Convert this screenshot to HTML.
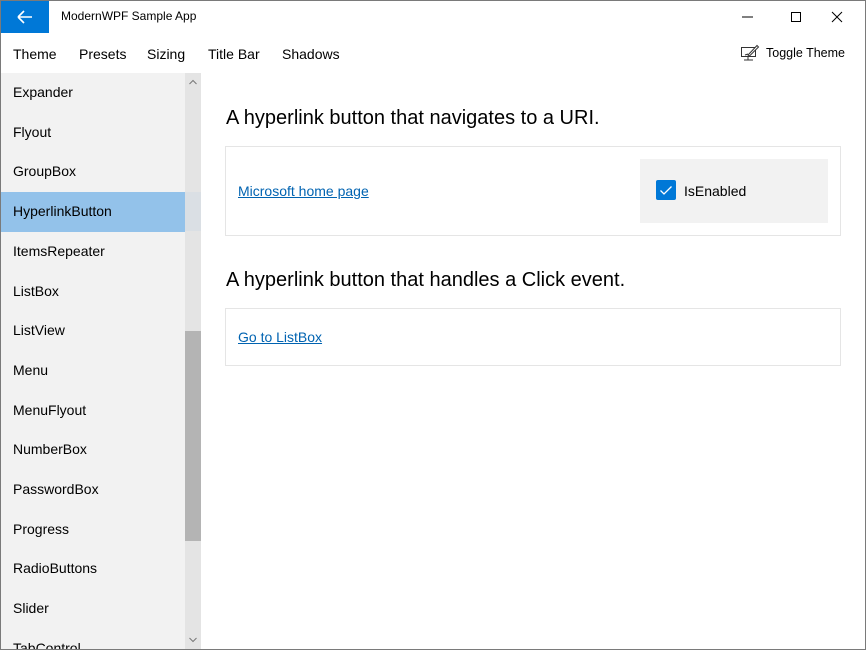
<!DOCTYPE html>
<html><head><meta charset="utf-8"><style>
*{margin:0;padding:0;box-sizing:border-box}
body{width:866px;height:650px;overflow:hidden;background:#fff;font-family:"Liberation Sans",sans-serif;color:#000;position:relative}
.frame{position:absolute;left:0;top:0;width:866px;height:650px;border:1px solid #7a7a7a;z-index:10;pointer-events:none}
.back{position:absolute;left:1px;top:1px;width:48px;height:32px;background:#0078d7}
.title{position:absolute;left:61px;top:9px;font-size:12px}
.menu{position:absolute;top:46px;font-size:14px}
.side{position:absolute;left:1px;top:73px;width:200px;height:576px;background:#f2f2f2;overflow:hidden}
.item{position:absolute;left:0;width:184px;height:39.7px;line-height:39.7px;padding-left:12px;font-size:14px}
.sb{position:absolute;left:184px;top:0;width:16px;height:576px;background:#e4e4e4}
.thumb{position:absolute;left:184px;top:258px;width:16px;height:210px;background:#b4b4b4}
h2{position:absolute;left:226px;font-weight:normal;font-size:20px}
.card{position:absolute;left:225px;width:616px;border:1px solid #e5e5e5}
a{color:#0063b1;font-size:14px;text-decoration:underline;position:absolute;left:12px}
</style></head><body>
<div class="frame"></div>
<div class="back"><svg width="48" height="32"><path d="M17 16H31M17 16L23 10M17 16L23 22" stroke="#fff" stroke-width="1.6" fill="none"/></svg></div>
<div class="title">ModernWPF Sample App</div>
<svg style="position:absolute;left:735px;top:5px" width="125" height="24"><path d="M7 12H18" stroke="#000"/><path d="M56.5 7.5h9v9h-9z" stroke="#000" fill="none"/><path d="M97 7L107 17M107 7L97 17" stroke="#000" fill="none"/></svg>
<div class="menu" style="left:13px">Theme</div>
<div class="menu" style="left:79px">Presets</div>
<div class="menu" style="left:147px">Sizing</div>
<div class="menu" style="left:208px">Title Bar</div>
<div class="menu" style="left:282px">Shadows</div>
<svg style="position:absolute;left:740px;top:44px" width="20" height="18"><rect x="1.5" y="3.5" width="14" height="9" fill="none" stroke="#333"/><path d="M8 12.5v3M4 16h9" stroke="#333"/><path d="M8 11L17 1.5l1.5 1.5L9.5 12z" fill="#fff" stroke="#333"/><path d="M5 11l3-1" stroke="#333"/></svg>
<div class="menu" style="left:766px;top:46px;font-size:12.5px">Toggle Theme</div>
<div class="side">
<div class="item" style="top:0">Expander</div>
<div class="item" style="top:39.7px">Flyout</div>
<div class="item" style="top:79.4px">GroupBox</div>
<div class="item" style="top:119.1px;background:#93c2ea">HyperlinkButton</div>
<div class="item" style="top:158.8px">ItemsRepeater</div>
<div class="item" style="top:198.5px">ListBox</div>
<div class="item" style="top:238.2px">ListView</div>
<div class="item" style="top:277.9px">Menu</div>
<div class="item" style="top:317.6px">MenuFlyout</div>
<div class="item" style="top:357.3px">NumberBox</div>
<div class="item" style="top:397px">PasswordBox</div>
<div class="item" style="top:436.7px">Progress</div>
<div class="item" style="top:476.4px">RadioButtons</div>
<div class="item" style="top:516.1px">Slider</div>
<div class="item" style="top:555.8px">TabControl</div>
<div class="sb"></div>
<div style="position:absolute;left:184px;top:119px;width:16px;height:39px;background:#dadfe4"></div>
<div class="thumb"></div>
<svg style="position:absolute;left:184px;top:0" width="16" height="576"><path d="M4.5 11L8 7.5L11.5 11" stroke="#777" fill="none"/><path d="M4.5 565L8 568.5L11.5 565" stroke="#777" fill="none"/></svg>
</div>
<h2 style="top:107px">A hyperlink button that navigates to a URI.</h2>
<div class="card" style="top:146px;height:90px">
<a style="top:36px">Microsoft home page</a>
<div style="position:absolute;left:414px;top:12px;width:188px;height:64px;background:#f2f2f2">
<div style="position:absolute;left:16px;top:21px;width:20px;height:20px;background:#0078d7;border-radius:2px"><svg width="20" height="20"><path d="M4.5 10.5l3.5 3.5 7.5-7.5" stroke="#fff" stroke-width="1.3" fill="none"/></svg></div>
<div style="position:absolute;left:44px;top:24px;font-size:14px">IsEnabled</div>
</div>
</div>
<h2 style="top:269px">A hyperlink button that handles a Click event.</h2>
<div class="card" style="top:308px;height:58px">
<a style="top:20px">Go to ListBox</a>
</div>
</body></html>
